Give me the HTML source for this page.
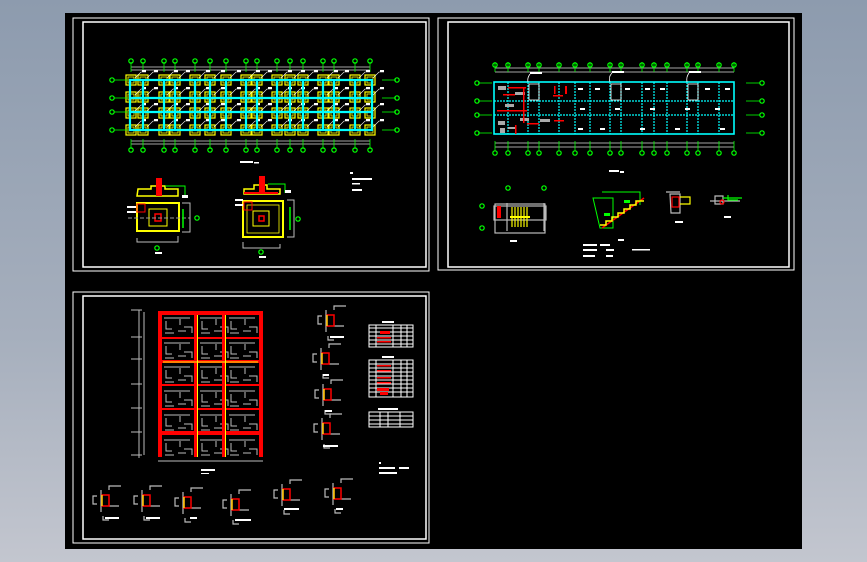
<!DOCTYPE html>
<html><head><meta charset="utf-8"><style>
html,body{margin:0;padding:0;width:867px;height:562px;overflow:hidden;background:linear-gradient(#8d9bae,#a6afbd 60%,#c3c6cf);font-family:"Liberation Sans",sans-serif}
svg{position:absolute;left:0;top:0}
</style></head><body>
<svg width="867" height="562" viewBox="0 0 867 562" xmlns="http://www.w3.org/2000/svg">
<defs>
<g id="ft"><rect x="-5" y="-5" width="10" height="10" fill="none" stroke="#ff0" stroke-width="1.2"/><rect x="-3" y="-3" width="6" height="6" fill="none" stroke="#ff0" stroke-width="0.8"/></g>
<g id="frow">
<use href="#ft" x="131"/><use href="#ft" x="143"/><use href="#ft" x="164"/><use href="#ft" x="175"/><use href="#ft" x="195"/><use href="#ft" x="210"/><use href="#ft" x="226"/><use href="#ft" x="246"/><use href="#ft" x="257"/><use href="#ft" x="277"/><use href="#ft" x="290"/><use href="#ft" x="303"/><use href="#ft" x="323"/><use href="#ft" x="334"/><use href="#ft" x="355"/><use href="#ft" x="370"/>
</g>
<g id="lbl"><path d="M-3 3 L3 -3 H8" stroke="#fff" stroke-width="0.6" fill="none"/><rect x="4" y="-5" width="4" height="2" fill="#fff"/></g>
<g id="lrow">
<use href="#lbl" x="138"/><use href="#lbl" x="150"/><use href="#lbl" x="170"/><use href="#lbl" x="182"/><use href="#lbl" x="202"/><use href="#lbl" x="217"/><use href="#lbl" x="233"/><use href="#lbl" x="252"/><use href="#lbl" x="264"/><use href="#lbl" x="284"/><use href="#lbl" x="297"/><use href="#lbl" x="310"/><use href="#lbl" x="330"/><use href="#lbl" x="341"/><use href="#lbl" x="362"/><use href="#lbl" x="376"/>
</g>
<g id="bub"><circle r="2.2" fill="none" stroke="#0f0" stroke-width="1.2"/></g>
<g id="vx1" stroke="#0f0" stroke-width="0.8">
<line x1="131" x2="131" y1="0" y2="10"/><line x1="143" x2="143" y1="0" y2="10"/><line x1="164" x2="164" y1="0" y2="10"/><line x1="175" x2="175" y1="0" y2="10"/><line x1="195" x2="195" y1="0" y2="10"/><line x1="210" x2="210" y1="0" y2="10"/><line x1="226" x2="226" y1="0" y2="10"/><line x1="246" x2="246" y1="0" y2="10"/><line x1="257" x2="257" y1="0" y2="10"/><line x1="277" x2="277" y1="0" y2="10"/><line x1="290" x2="290" y1="0" y2="10"/><line x1="303" x2="303" y1="0" y2="10"/><line x1="323" x2="323" y1="0" y2="10"/><line x1="334" x2="334" y1="0" y2="10"/><line x1="355" x2="355" y1="0" y2="10"/><line x1="370" x2="370" y1="0" y2="10"/>
</g>
<g id="bx1">
<use href="#bub" x="131"/><use href="#bub" x="143"/><use href="#bub" x="164"/><use href="#bub" x="175"/><use href="#bub" x="195"/><use href="#bub" x="210"/><use href="#bub" x="226"/><use href="#bub" x="246"/><use href="#bub" x="257"/><use href="#bub" x="277"/><use href="#bub" x="290"/><use href="#bub" x="303"/><use href="#bub" x="323"/><use href="#bub" x="334"/><use href="#bub" x="355"/><use href="#bub" x="370"/>
</g>
<g id="vx2" stroke="#0f0" stroke-width="0.8">
<line x1="495" x2="495" y1="0" y2="10"/><line x1="508" x2="508" y1="0" y2="10"/><line x1="528" x2="528" y1="0" y2="10"/><line x1="539" x2="539" y1="0" y2="10"/><line x1="559" x2="559" y1="0" y2="10"/><line x1="575" x2="575" y1="0" y2="10"/><line x1="590" x2="590" y1="0" y2="10"/><line x1="610" x2="610" y1="0" y2="10"/><line x1="621" x2="621" y1="0" y2="10"/><line x1="642" x2="642" y1="0" y2="10"/><line x1="654" x2="654" y1="0" y2="10"/><line x1="667" x2="667" y1="0" y2="10"/><line x1="687" x2="687" y1="0" y2="10"/><line x1="698" x2="698" y1="0" y2="10"/><line x1="719" x2="719" y1="0" y2="10"/><line x1="734" x2="734" y1="0" y2="10"/>
</g>
<g id="bx2">
<use href="#bub" x="495"/><use href="#bub" x="508"/><use href="#bub" x="528"/><use href="#bub" x="539"/><use href="#bub" x="559"/><use href="#bub" x="575"/><use href="#bub" x="590"/><use href="#bub" x="610"/><use href="#bub" x="621"/><use href="#bub" x="642"/><use href="#bub" x="654"/><use href="#bub" x="667"/><use href="#bub" x="687"/><use href="#bub" x="698"/><use href="#bub" x="719"/><use href="#bub" x="734"/>
</g>
<g id="cyv" stroke="#0ff" stroke-width="1.2" stroke-dasharray="2 1">
<line x1="508" x2="508" y1="82" y2="134"/><line x1="528" x2="528" y1="82" y2="134"/><line x1="539" x2="539" y1="82" y2="134"/><line x1="559" x2="559" y1="82" y2="134"/><line x1="575" x2="575" y1="82" y2="134"/><line x1="590" x2="590" y1="82" y2="134"/><line x1="610" x2="610" y1="82" y2="134"/><line x1="621" x2="621" y1="82" y2="134"/><line x1="642" x2="642" y1="82" y2="134"/><line x1="654" x2="654" y1="82" y2="134"/><line x1="667" x2="667" y1="82" y2="134"/><line x1="687" x2="687" y1="82" y2="134"/><line x1="698" x2="698" y1="82" y2="134"/><line x1="719" x2="719" y1="82" y2="134"/>
</g>
<g id="det" stroke="#bbb" stroke-width="1.2" fill="none"><path d="M-8 -4 H-12 V4 H-8 M-4 -10 V12 M4 -10 V-14 H16 M4 6 H14 M-2 16 V20 H4"/><rect x="-3" y="-5" width="7" height="11" stroke="#f00" stroke-width="1.5"/><line x1="-3" y1="-5" x2="-3" y2="6" stroke="#ff0"/></g>
<g id="bay" stroke="#bbb" stroke-width="1" fill="none"><path d="M4 5 H30 M6 8 V16 H12 M20 6 V12 M24 14 H32 V20 M5 20 H14 M18 18 H26"/></g>
</defs>

<!-- canvas -->
<rect x="65" y="13" width="737" height="536" fill="#000"/>

<!-- sheet 1 -->
<rect x="73" y="18" width="356" height="253" fill="none" stroke="#fff" stroke-width="1"/>
<rect x="83" y="22" width="343" height="245" fill="none" stroke="#fff" stroke-width="1.5"/>
<g stroke="#ddd" stroke-width="0.8"><line x1="131" y1="67" x2="370" y2="67"/><line x1="131" y1="70" x2="370" y2="70"/><line x1="131" y1="141" x2="370" y2="141"/><line x1="131" y1="144" x2="370" y2="144"/></g>
<use href="#vx1" y="62"/><use href="#bx1" y="61"/>
<use href="#vx1" y="139"/><use href="#bx1" y="150"/>
<use href="#frow" y="80"/><use href="#frow" y="97"/><use href="#frow" y="113"/><use href="#frow" y="130"/>
<use href="#lrow" y="75"/><use href="#lrow" y="92"/><use href="#lrow" y="108"/><use href="#lrow" y="124"/>
<g stroke="#0ff" stroke-width="2.2" fill="none">
<rect x="130" y="80" width="242" height="50"/><line x1="130" y1="98" x2="372" y2="98"/><line x1="130" y1="112" x2="372" y2="112"/>
<line x1="143" y1="80" x2="143" y2="130"/><line x1="164" y1="80" x2="164" y2="130"/><line x1="175" y1="80" x2="175" y2="130"/><line x1="195" y1="80" x2="195" y2="130"/><line x1="210" y1="80" x2="210" y2="130"/><line x1="226" y1="80" x2="226" y2="130"/><line x1="246" y1="80" x2="246" y2="130"/><line x1="257" y1="80" x2="257" y2="130"/><line x1="277" y1="80" x2="277" y2="130"/><line x1="290" y1="80" x2="290" y2="130"/><line x1="303" y1="80" x2="303" y2="130"/><line x1="323" y1="80" x2="323" y2="130"/><line x1="334" y1="80" x2="334" y2="130"/><line x1="355" y1="80" x2="355" y2="130"/>
</g>
<g stroke="#0f0" stroke-width="0.8"><line x1="114" y1="80" x2="128" y2="80"/><line x1="114" y1="98" x2="128" y2="98"/><line x1="114" y1="112" x2="128" y2="112"/><line x1="114" y1="130" x2="128" y2="130"/><line x1="382" y1="80" x2="396" y2="80"/><line x1="382" y1="98" x2="396" y2="98"/><line x1="382" y1="112" x2="396" y2="112"/><line x1="382" y1="130" x2="396" y2="130"/></g>
<use href="#bub" x="112" y="80"/><use href="#bub" x="112" y="98"/><use href="#bub" x="112" y="112"/><use href="#bub" x="112" y="130"/>
<use href="#bub" x="397" y="80"/><use href="#bub" x="397" y="98"/><use href="#bub" x="397" y="112"/><use href="#bub" x="397" y="130"/>
<g fill="#fff"><rect x="240" y="161" width="13" height="2"/><rect x="254" y="162" width="5" height="1.5"/><rect x="350" y="172" width="3" height="2"/><rect x="352" y="178" width="20" height="2"/><rect x="352" y="183" width="8" height="1.5"/><rect x="352" y="189" width="10" height="2"/></g>
<!-- footing details -->
<g fill="none">
<rect x="137" y="203" width="42" height="28" stroke="#ff0" stroke-width="2"/><rect x="149" y="209" width="18" height="17" stroke="#ff0" stroke-width="1"/><rect x="155" y="214" width="6" height="7" stroke="#f00" stroke-width="1.5"/>
<path d="M137 196 H178 V189 H165 V186 H151 V189 H138 Z" stroke="#ff0" stroke-width="1.5"/><rect x="156" y="178" width="6" height="18" fill="#f00"/>
<path d="M165 186 H185 V197" stroke="#0f0" stroke-width="1"/><line x1="128" y1="218" x2="190" y2="218" stroke="#999" stroke-dasharray="4 2"/>
<rect x="137" y="204" width="8" height="8" stroke="#f00"/><path d="M137 238 V242 H178 V236" stroke="#bbb"/><path d="M182 203 H190 V232 H182" stroke="#bbb"/>
<rect x="243" y="201" width="40" height="36" stroke="#ff0" stroke-width="2"/><rect x="247" y="205" width="32" height="28" stroke="#ff0" stroke-width="0.8"/><rect x="253" y="211" width="16" height="15" stroke="#ff0"/><rect x="259" y="216" width="5" height="5" stroke="#f00" stroke-width="1.5"/>
<path d="M244 194 H280 V189 H267 V185 H254 V189 H244 Z" stroke="#ff0" stroke-width="1.5"/><rect x="259" y="176" width="6" height="18" fill="#f00"/><rect x="244" y="192" width="34" height="2" fill="#f00"/>
<path d="M268 184 H285 V193" stroke="#0f0"/><path d="M243 242 V248 H280 V244" stroke="#bbb"/><path d="M287 200 H294 V237 H287" stroke="#bbb"/><rect x="244" y="202" width="8" height="8" stroke="#f00"/>
<path d="M290 207 V230" stroke="#0f0" stroke-width="1.5"/><path d="M183 209 V228" stroke="#0f0" stroke-width="1.5"/>
</g>
<use href="#bub" x="157" y="248"/><use href="#bub" x="261" y="252"/><use href="#bub" x="197" y="218"/><use href="#bub" x="298" y="219"/>
<g fill="#fff"><rect x="155" y="252" width="7" height="2"/><rect x="259" y="256" width="7" height="2"/><rect x="127" y="206" width="9" height="2"/><rect x="127" y="211" width="9" height="2"/><rect x="235" y="199" width="8" height="2"/><rect x="235" y="204" width="8" height="2"/><rect x="182" y="195" width="6" height="3"/><rect x="285" y="190" width="6" height="3"/></g>

<!-- sheet 2 -->
<rect x="438" y="18" width="356" height="252" fill="none" stroke="#fff" stroke-width="1"/>
<rect x="448" y="22" width="341" height="245" fill="none" stroke="#fff" stroke-width="1.5"/>
<g stroke="#ddd" stroke-width="0.8"><line x1="495" y1="68" x2="734" y2="68"/><line x1="495" y1="72" x2="734" y2="72"/><line x1="495" y1="143" x2="734" y2="143"/><line x1="495" y1="147" x2="734" y2="147"/></g>
<use href="#vx2" y="62"/><use href="#bx2" y="65"/>
<use href="#vx2" y="141"/><use href="#bx2" y="153"/>
<g stroke="#0ff" stroke-width="1.6" fill="none"><rect x="494" y="82" width="240" height="52"/></g>
<g stroke="#0ff" stroke-width="1.3" stroke-dasharray="2 1"><line x1="494" y1="101" x2="734" y2="101"/><line x1="494" y1="115" x2="734" y2="115"/></g>
<use href="#cyv"/>
<g fill="#fff"><rect x="530" y="72" width="12" height="2"/><rect x="612" y="71" width="12" height="2"/><rect x="689" y="71" width="12" height="2"/></g>
<g stroke="#fff" fill="none" stroke-width="0.8"><path d="M530 74 Q527 78 528 82"/><path d="M612 73 Q608 77 610 82"/><path d="M689 73 Q686 77 687 82"/><rect x="529" y="84" width="10" height="16"/><rect x="611" y="84" width="10" height="16"/><rect x="688" y="84" width="10" height="16"/></g>
<g fill="#aaa"><rect x="498" y="86" width="8" height="4"/><rect x="515" y="92" width="10" height="3"/><rect x="505" y="104" width="9" height="3"/><rect x="498" y="121" width="7" height="4"/><rect x="520" y="118" width="9" height="3"/><rect x="540" y="119" width="10" height="3"/><rect x="500" y="128" width="5" height="5"/><rect x="508" y="127" width="8" height="2"/></g>
<g fill="#f00"><rect x="508" y="87" width="18" height="1.5"/><rect x="503" y="94" width="12" height="1.5"/><rect x="497" y="110" width="30" height="1.5"/><rect x="523" y="88" width="1.5" height="35"/><rect x="515" y="125" width="1.5" height="9"/><rect x="527" y="123" width="12" height="1.5"/><rect x="554" y="86" width="1.5" height="8"/><rect x="565" y="86" width="2" height="8"/><rect x="554" y="120" width="10" height="1.5"/><rect x="553" y="95" width="10" height="1.5"/></g>
<g fill="#fff"><rect x="578" y="88" width="5" height="2"/><rect x="595" y="88" width="5" height="2"/><rect x="625" y="88" width="5" height="2"/><rect x="645" y="88" width="5" height="2"/><rect x="660" y="88" width="5" height="2"/><rect x="705" y="88" width="5" height="2"/><rect x="725" y="88" width="5" height="2"/><rect x="580" y="108" width="5" height="2"/><rect x="615" y="108" width="5" height="2"/><rect x="650" y="108" width="5" height="2"/><rect x="685" y="108" width="5" height="2"/><rect x="715" y="108" width="5" height="2"/><rect x="578" y="128" width="5" height="2"/><rect x="600" y="128" width="5" height="2"/><rect x="640" y="128" width="5" height="2"/><rect x="675" y="128" width="5" height="2"/><rect x="720" y="128" width="5" height="2"/><rect x="609" y="170" width="10" height="2"/><rect x="620" y="171" width="4" height="2"/></g>
<g stroke="#0f0" stroke-width="0.8"><line x1="478" y1="83" x2="492" y2="83"/><line x1="478" y1="101" x2="492" y2="101"/><line x1="478" y1="115" x2="492" y2="115"/><line x1="478" y1="133" x2="492" y2="133"/><line x1="746" y1="83" x2="760" y2="83"/><line x1="746" y1="101" x2="760" y2="101"/><line x1="746" y1="115" x2="760" y2="115"/><line x1="746" y1="133" x2="760" y2="133"/></g>
<use href="#bub" x="477" y="83"/><use href="#bub" x="477" y="101"/><use href="#bub" x="477" y="115"/><use href="#bub" x="477" y="133"/><use href="#bub" x="762" y="83"/><use href="#bub" x="762" y="101"/><use href="#bub" x="762" y="115"/><use href="#bub" x="762" y="133"/>
<!-- stair plan -->
<g fill="none" stroke="#bbb" stroke-width="1.2"><rect x="494" y="206" width="52" height="14"/><line x1="507" y1="203" x2="507" y2="231"/><line x1="544" y1="203" x2="544" y2="231"/><rect x="495" y="204" width="50" height="29"/></g>
<g stroke="#ff0" stroke-width="1.2"><line x1="512" y1="207" x2="512" y2="227"/><line x1="515" y1="207" x2="515" y2="227"/><line x1="518" y1="207" x2="518" y2="227"/><line x1="521" y1="207" x2="521" y2="227"/><line x1="524" y1="207" x2="524" y2="227"/><line x1="527" y1="207" x2="527" y2="227"/><line x1="510" y1="217" x2="530" y2="217" stroke-width="2"/></g>
<rect x="497" y="206" width="4" height="12" fill="#f00"/><use href="#bub" x="508" y="188"/><use href="#bub" x="544" y="188"/><use href="#bub" x="482" y="206"/><use href="#bub" x="482" y="228"/>
<g fill="#fff"><rect x="510" y="240" width="7" height="2"/><rect x="618" y="239" width="6" height="2"/><rect x="675" y="221" width="8" height="2"/><rect x="724" y="216" width="7" height="2"/><rect x="583" y="244" width="14" height="2"/><rect x="600" y="244" width="10" height="2"/><rect x="583" y="249" width="14" height="2"/><rect x="606" y="249" width="8" height="2"/><rect x="632" y="249" width="18" height="1.5"/><rect x="583" y="255" width="12" height="2"/><rect x="606" y="255" width="7" height="2"/></g>
<!-- stair section -->
<g fill="none"><path d="M602 192 H640 V205 M593 198 H613 V228 H600 Z" stroke="#0f0"/><path d="M602 228 L644 198" stroke="#f00" stroke-width="1.5"/><path d="M600 225 H606 V221 H612 V217 H618 V213 H624 V209 H630 V205 H636 V201 H644" stroke="#ff0" stroke-width="1.5"/><rect x="604" y="213" width="6" height="3" fill="#0f0"/><rect x="624" y="200" width="6" height="3" fill="#0f0"/></g>
<g fill="none" stroke="#bbb" stroke-width="1.2"><path d="M670 194 H680 V213 H671 Z M666 192 H680"/><rect x="672" y="197" width="7" height="10" stroke="#f00"/><path d="M680 197 H690 V204 H680" stroke="#ff0"/><path d="M715 196 H723 V204 H715 Z M710 201 H740" /><circle cx="722" cy="202" r="2" stroke="#f00"/><path d="M723 198 H742 M728 195 V200 H738" stroke="#0f0"/></g>

<!-- sheet 3 -->
<rect x="73" y="292" width="356" height="251" fill="none" stroke="#fff" stroke-width="1"/>
<rect x="83" y="296" width="343" height="243" fill="none" stroke="#fff" stroke-width="1.5"/>
<!-- frame left dims -->
<g stroke="#bbb" stroke-width="1" fill="none"><line x1="139" y1="310" x2="139" y2="458"/><line x1="144" y1="312" x2="144" y2="455"/><path d="M131 310 H142 M131 337 H142 M131 359 H142 M131 384 H142 M131 408 H142 M131 432 H142 M131 455 H142"/></g>
<g stroke="#bbb" fill="none"><use href="#bay" x="160" y="313"/><use href="#bay" x="196" y="313"/><use href="#bay" x="225" y="313"/><use href="#bay" x="160" y="338"/><use href="#bay" x="196" y="338"/><use href="#bay" x="225" y="338"/><use href="#bay" x="160" y="362"/><use href="#bay" x="196" y="362"/><use href="#bay" x="225" y="362"/><use href="#bay" x="160" y="386"/><use href="#bay" x="196" y="386"/><use href="#bay" x="225" y="386"/><use href="#bay" x="160" y="410"/><use href="#bay" x="196" y="410"/><use href="#bay" x="225" y="410"/><use href="#bay" x="160" y="435"/><use href="#bay" x="196" y="435"/><use href="#bay" x="225" y="435"/></g>
<g fill="#f00"><rect x="158" y="311" width="105" height="4"/><rect x="158" y="337" width="105" height="2"/><rect x="158" y="360" width="105" height="3"/><rect x="158" y="384" width="105" height="2"/><rect x="158" y="408" width="105" height="2"/><rect x="158" y="431" width="105" height="4"/>
<rect x="158" y="311" width="4" height="146"/><rect x="259" y="311" width="4" height="146"/><rect x="194" y="311" width="3" height="146"/><rect x="222" y="311" width="3" height="146"/></g>
<g stroke="#ff0" stroke-width="1"><line x1="197.5" y1="315" x2="197.5" y2="457"/><line x1="225.5" y1="315" x2="225.5" y2="457"/><line x1="163" y1="362" x2="258" y2="362"/></g>
<line x1="158" y1="461" x2="263" y2="461" stroke="#bbb"/>
<g fill="#fff"><rect x="201" y="469" width="14" height="2"/><rect x="201" y="473" width="8" height="1"/><rect x="379" y="462" width="2" height="2"/><rect x="379" y="467" width="16" height="2"/><rect x="399" y="467" width="10" height="2"/><rect x="379" y="472" width="18" height="2"/></g>
<use href="#det" x="330" y="320"/><use href="#det" x="325" y="358"/><use href="#det" x="327" y="394"/><use href="#det" x="326" y="428"/>
<use href="#det" x="105" y="500"/><use href="#det" x="146" y="500"/><use href="#det" x="187" y="502"/><use href="#det" x="235" y="504"/><use href="#det" x="286" y="494"/><use href="#det" x="337" y="493"/>
<g fill="#fff"><rect x="330" y="336" width="14" height="2"/><rect x="323" y="374" width="6" height="2"/><rect x="325" y="410" width="7" height="2"/><rect x="323" y="445" width="15" height="2"/><rect x="105" y="517" width="14" height="2"/><rect x="146" y="517" width="14" height="2"/><rect x="190" y="517" width="7" height="2"/><rect x="235" y="519" width="16" height="2"/><rect x="284" y="508" width="15" height="2"/><rect x="336" y="508" width="7" height="2"/></g>
<!-- tables -->
<g fill="none" stroke="#fff" stroke-width="1"><rect x="369" y="325" width="44" height="22"/><line x1="369" y1="328" x2="413" y2="328"/><line x1="369" y1="332" x2="413" y2="332"/><line x1="369" y1="336" x2="413" y2="336"/><line x1="369" y1="340" x2="413" y2="340"/><line x1="369" y1="344" x2="413" y2="344"/><line x1="376" y1="325" x2="376" y2="347"/><line x1="393" y1="325" x2="393" y2="347"/><line x1="401" y1="325" x2="401" y2="347"/><line x1="407" y1="325" x2="407" y2="347"/>
<rect x="369" y="360" width="44" height="37"/><line x1="369" y1="364" x2="413" y2="364"/><line x1="369" y1="368" x2="413" y2="368"/><line x1="369" y1="372" x2="413" y2="372"/><line x1="369" y1="376" x2="413" y2="376"/><line x1="369" y1="380" x2="413" y2="380"/><line x1="369" y1="384" x2="413" y2="384"/><line x1="369" y1="388" x2="413" y2="388"/><line x1="369" y1="392" x2="413" y2="392"/><line x1="376" y1="360" x2="376" y2="397"/><line x1="393" y1="360" x2="393" y2="397"/><line x1="401" y1="360" x2="401" y2="397"/><line x1="407" y1="360" x2="407" y2="397"/>
<rect x="369" y="412" width="44" height="15"/><line x1="369" y1="416" x2="413" y2="416"/><line x1="369" y1="420" x2="413" y2="420"/><line x1="369" y1="424" x2="413" y2="424"/><line x1="380" y1="412" x2="380" y2="427"/><line x1="388" y1="412" x2="388" y2="427"/><line x1="400" y1="412" x2="400" y2="427"/></g>
<g fill="#f00"><rect x="380" y="331" width="10" height="3"/><rect x="377" y="337" width="14" height="1.5"/><rect x="377" y="341" width="14" height="1.5"/><rect x="377" y="365" width="14" height="1.5"/><rect x="377" y="370" width="14" height="1.5"/><rect x="377" y="377" width="14" height="1.5"/><rect x="377" y="382" width="14" height="1.5"/><rect x="377" y="388" width="12" height="3"/><rect x="380" y="392" width="8" height="3"/></g>
<g fill="#fff"><rect x="382" y="321" width="12" height="2"/><rect x="382" y="356" width="12" height="2"/><rect x="378" y="408" width="20" height="2"/></g>
</svg>
</body></html>
